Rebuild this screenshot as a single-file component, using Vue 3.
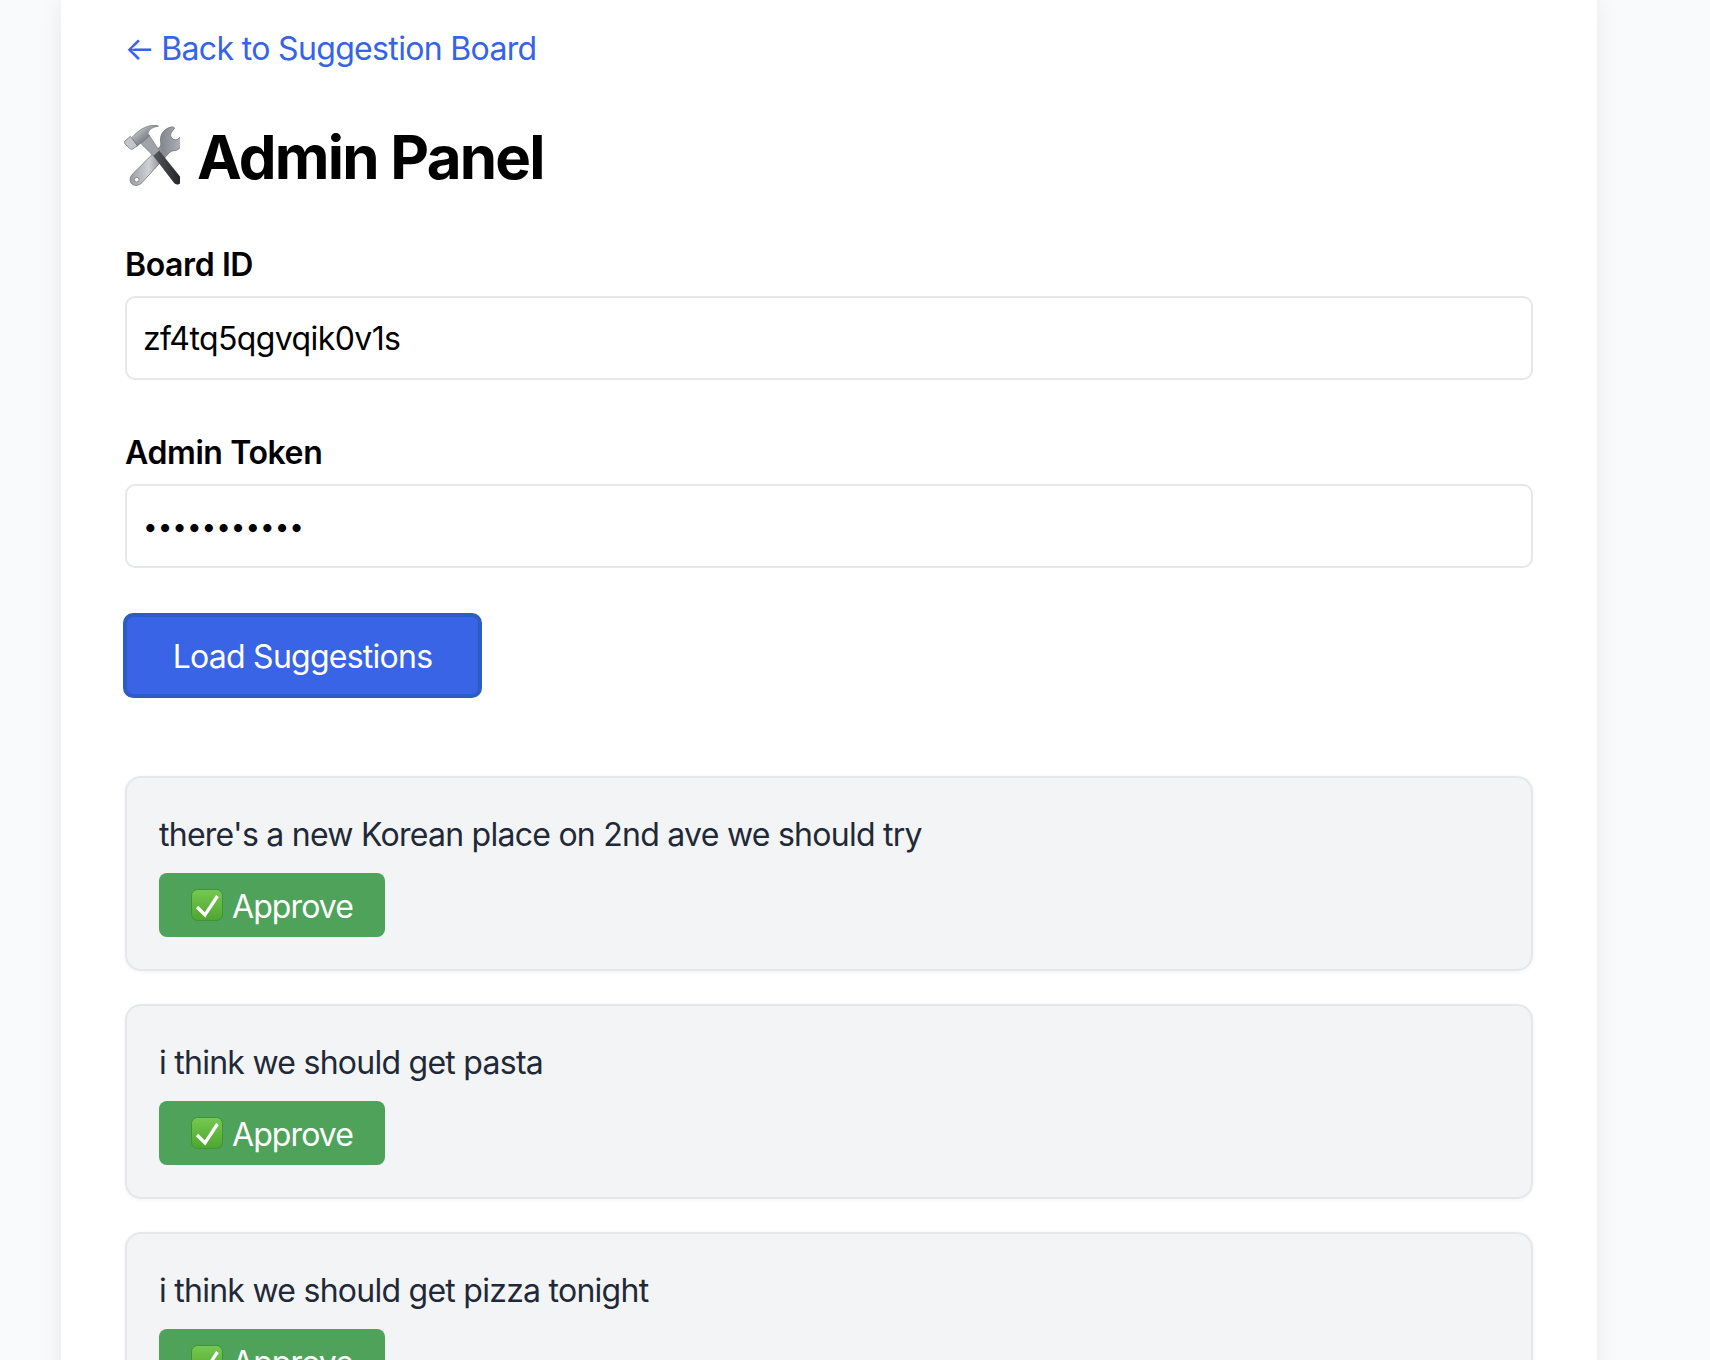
<script setup>
const suggestions = [
  "there's a new Korean place on 2nd ave we should try",
  'i think we should get pasta',
  'i think we should get pizza tonight',
]
</script>

<template>
  <div class="page">
    <main class="panel">
      <a class="back" href="#"><span class="arrow">←</span> Back to Suggestion Board</a>
      <h1 class="title">
        <svg class="tools" viewBox="0 29 180 192" aria-hidden="true">
          <defs>
            <linearGradient id="steel" x1="0" y1="0" x2="1" y2="0">
              <stop offset="0" stop-color="#9a9da4" />
              <stop offset=".35" stop-color="#cfd1d6" />
              <stop offset=".6" stop-color="#85888f" />
              <stop offset="1" stop-color="#b4b7bd" />
            </linearGradient>
            <linearGradient id="head" x1="0" y1="0" x2="1" y2="1">
              <stop offset="0" stop-color="#e4e6ea" />
              <stop offset=".5" stop-color="#8b8e95" />
              <stop offset="1" stop-color="#4f5257" />
            </linearGradient>
            <linearGradient id="grip" x1="0" y1="0" x2="1" y2="0">
              <stop offset="0" stop-color="#55575c" />
              <stop offset="1" stop-color="#222326" />
            </linearGradient>
          </defs>
          <path fill="url(#steel)" stroke="#5f6268" stroke-width="2" fill-rule="evenodd" d="M150 36C130 42 118 60 122 82C123 88 122 92 118 96L38 176C28 186 28 200 36 206C46 214 58 210 66 202L148 112C152 108 158 106 164 106C180 104 192 86 190 58L172 72C165 76 158 72 154 66C150 60 152 52 158 46L164 38C160 34 155 34 150 36ZM50 186a7 7 0 1 0 .1 14a7 7 0 1 0-.1-14Z" />
          <path fill="#9fa2a8" stroke="#5f6268" stroke-width="1.500" d="M62 84L88 60L118 106L100 122Z" />
          <path fill="url(#grip)" d="M100 122L118 106L182 186C188 194 186 202 178 206C170 210 164 206 160 200Z" />
          <path fill="url(#head)" stroke="#5f6268" stroke-width="1.500" d="M36 66C50 50 70 34 95 30C105 28 112 30 116 33C100 34 88 42 84 54L88 62L62 84L50 94Z" />
          <path fill="#c3c5ca" stroke="#5f6268" stroke-width="2" d="M14 78L31 63L52 91L37 102C31 102 26 98 14 84Z" />
        </svg>
        <span>Admin Panel</span>
      </h1>

      <label class="field">
        <span class="label">Board ID</span>
        <input class="input" type="text" value="zf4tq5qgvqik0v1s" />
      </label>

      <label class="field">
        <span class="label">Admin Token</span>
        <input class="input secret" type="password" value="supersecret" />
      </label>

      <button class="load" type="button">Load Suggestions</button>

      <section class="list">
        <article v-for="text in suggestions" :key="text" class="card">
          <p class="text">{{ text }}</p>
          <button class="approve" type="button">
            <svg class="check" viewBox="0 0 32 32" aria-hidden="true">
              <defs>
                <linearGradient id="green" x1="0" y1="0" x2="0" y2="1">
                  <stop offset="0" stop-color="#76c950" />
                  <stop offset="1" stop-color="#4ea52f" />
                </linearGradient>
              </defs>
              <rect x=".5" y=".5" width="31" height="31" rx="6" fill="url(#green)" stroke="#41913a" />
              <path d="M6 18L14 26L26.500 7" fill="none" stroke="#fff" stroke-width="3.300" />
            </svg>
            <span>Approve</span>
          </button>
        </article>
      </section>
    </main>
  </div>
</template>

<style>
html, body { margin: 0; background: #f9fafb; }
</style>

<style scoped>
.page {
  height: 1360px;
  overflow: hidden;
  font-family: Inter, "Liberation Sans", sans-serif;
}
.panel {
  box-sizing: border-box;
  width: 1536px;
  min-height: 1360px;
  margin-left: 61px;
  padding: 29px 64px 0;
  background: #fff;
  box-shadow: 0 0 24px rgba(0, 0, 0, .07);
  display: flex;
  flex-direction: column;
  align-items: flex-start;
}
.back {
  color: #3563e9;
  font-size: 32px;
  line-height: 40px;
  letter-spacing: -.66px;
  text-decoration: none;
}
.arrow { margin-right: -1.5px; margin-left: -.5px; }
.title {
  margin: 54px 0 0;
  display: flex;
  align-items: center;
  gap: 17px;
  font-size: 60px;
  line-height: 68px;
  letter-spacing: -1.75px;
  font-weight: 700;
  color: #000;
}
.tools { width: 60px; height: 64px; margin-left: -5px; }
.field {
  display: flex;
  flex-direction: column;
  align-self: stretch;
  margin-top: 37px;
  margin-bottom: 16px;
}
.title + .field { margin-top: 54px; }
.label {
  font-size: 32px;
  line-height: 40px;
  letter-spacing: -.4px;
  font-weight: 600;
  color: #000;
  margin-bottom: 11px;
}
.input {
  box-sizing: border-box;
  height: 84px;
  padding: 0 16px;
  border: 2px solid #e5e7eb;
  border-radius: 10px;
  font: 32px Inter, "Liberation Sans", sans-serif;
  letter-spacing: -.6px;
  color: #000;
  background: #fff;
  outline: none;
}
.secret { font-size: 26px; letter-spacing: 0; }
.load {
  flex: none;
  margin: 29px 0 0 -2px;
  width: 359px;
  height: 85px;
  border: 4px solid #2c5cc5;
  border-radius: 10px;
  background: #3964e5;
  color: #fff;
  font: 32px Inter, "Liberation Sans", sans-serif;
  letter-spacing: -.75px;
  padding: 1px 0 0;
}
.list {
  align-self: stretch;
  margin-top: 78px;
  display: flex;
  flex-direction: column;
  gap: 33px;
}
.card {
  box-sizing: border-box;
  height: 195px;
  padding: 37px 32px 0;
  background: #f3f4f6;
  border: 2px solid #e5e7eb;
  border-radius: 16px;
  box-shadow: 0 1px 4px rgba(0, 0, 0, .05);
  flex: none;
}
.text {
  margin: 0;
  font-size: 32px;
  line-height: 40px;
  letter-spacing: -.74px;
  color: #1f2937;
}
.approve {
  margin-top: 18px;
  width: 226px;
  height: 64px;
  display: flex;
  align-items: center;
  gap: 9px;
  padding: 0 0 0 32px;
  border: 0;
  border-radius: 8px;
  background: #4ea259;
  color: #fff;
  font: 32px Inter, "Liberation Sans", sans-serif;
  letter-spacing: -.9px;
}
.approve span { position: relative; top: 1px; }
.check { width: 32px; height: 32px; flex: none; }
</style>
